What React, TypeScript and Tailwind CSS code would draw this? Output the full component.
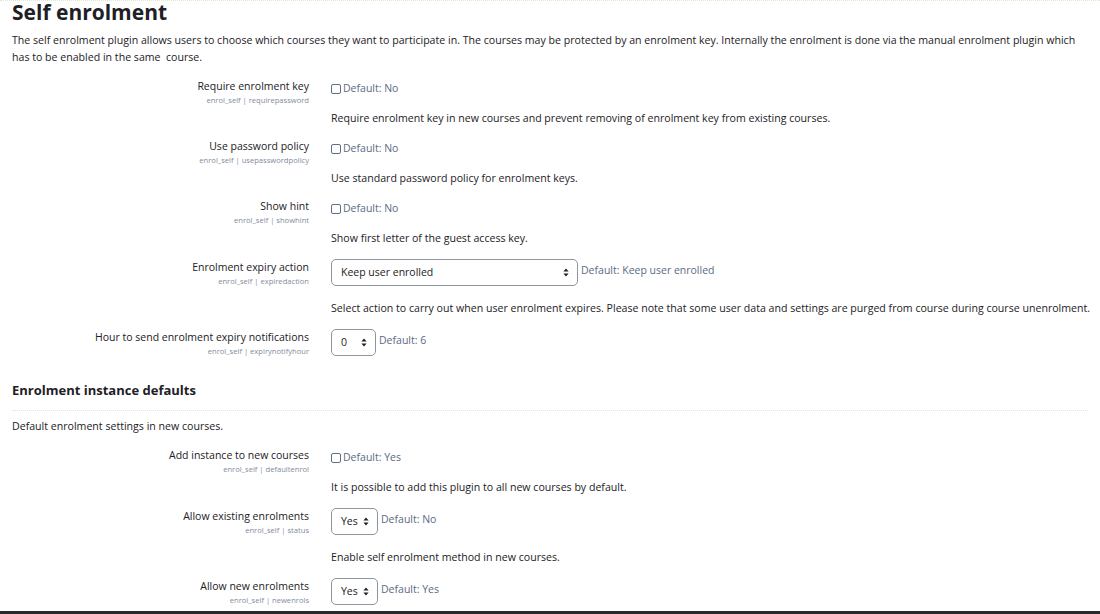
const font = { fontFamily: '"Open Sans", "Noto Sans", sans-serif' };

type Setting = {
  label: string;
  key: string;
  kind: "check" | "select";
  value?: string;
  width?: string;
  def: string;
  desc?: string;
};

const selfSettings: Setting[] = [
  {
    label: "Require enrolment key",
    key: "requirepassword",
    kind: "check",
    def: "Default: No",
    desc: "Require enrolment key in new courses and prevent removing of enrolment key from existing courses.",
  },
  {
    label: "Use password policy",
    key: "usepasswordpolicy",
    kind: "check",
    def: "Default: No",
    desc: "Use standard password policy for enrolment keys.",
  },
  {
    label: "Show hint",
    key: "showhint",
    kind: "check",
    def: "Default: No",
    desc: "Show first letter of the guest access key.",
  },
  {
    label: "Enrolment expiry action",
    key: "expiredaction",
    kind: "select",
    value: "Keep user enrolled",
    width: "w-[247px]",
    def: "Default: Keep user enrolled",
    desc: "Select action to carry out when user enrolment expires. Please note that some user data and settings are purged from course during course unenrolment.",
  },
  {
    label: "Hour to send enrolment expiry notifications",
    key: "expirynotifyhour",
    kind: "select",
    value: "0",
    width: "w-[45px]",
    def: "Default: 6",
  },
];

const instanceSettings: Setting[] = [
  {
    label: "Add instance to new courses",
    key: "defaultenrol",
    kind: "check",
    def: "Default: Yes",
    desc: "It is possible to add this plugin to all new courses by default.",
  },
  {
    label: "Allow existing enrolments",
    key: "status",
    kind: "select",
    value: "Yes",
    width: "w-[47px]",
    def: "Default: No",
    desc: "Enable self enrolment method in new courses.",
  },
  {
    label: "Allow new enrolments",
    key: "newenrols",
    kind: "select",
    value: "Yes",
    width: "w-[47px]",
    def: "Default: Yes",
  },
];

function Arrows() {
  return (
    <svg width="6" height="9" viewBox="0 0 6 9" className="shrink-0">
      <path d="M3 0.5 L5.6 3.6 H0.4 Z M3 8.5 L5.6 5.4 H0.4 Z" fill="#1d2125" />
    </svg>
  );
}

function Row({ s }: { s: Setting }) {
  const isSelect = s.kind === "select";
  return (
    <div className="mb-[13px] flex">
      <div className={`w-[309px] shrink-0 text-right ${isSelect ? "pt-[1px]" : ""}`}>
        <div className="h-[14px] text-[10.5px] leading-[14px] text-[#1d2125]">{s.label}</div>
        <div className="mt-[2px] text-[7.6px] leading-[10px] text-[#7f8c9c]">
          enrol_self | {s.key}
        </div>
      </div>
      <div className="ml-[22px] flex flex-col">
        {isSelect ? (
          <div className="flex items-start">
            <div
              className={`${s.width} flex h-[27px] items-center justify-between rounded-[5px] border border-[#8f959e] pl-[9px] pr-[8px] text-[10.5px] text-[#1d2125]`}
            >
              <span>{s.value}</span>
              <Arrows />
            </div>
            <span className="ml-[3px] mt-[4px] text-[10.5px] leading-[14px] text-[#5a6b82]">
              {s.def}
            </span>
          </div>
        ) : (
          <div className="flex h-[20px] items-center">
            <span className="mr-[2px] inline-block h-[10px] w-[10px] rounded-[2px] border border-[#5e6f88] bg-white" />
            <span className="text-[10.5px] text-[#5a6b82]">{s.def}</span>
          </div>
        )}
        {s.desc && (
          <div
            className={`${isSelect ? "mt-[14px]" : "mt-[11px]"} h-[16px] whitespace-nowrap text-[10.6px] leading-[16px] text-[#1d2125]`}
          >
            {s.desc}
          </div>
        )}
      </div>
    </div>
  );
}

export default function App() {
  return (
    <div style={font} className="relative h-[614px] w-[1100px] overflow-hidden bg-white">
      <div className="border-t border-dotted border-[#dfe8c8]" />
      <div className="px-[12px]">
        <h2 className="text-[21px] font-bold leading-[22px] text-[#1d2125]">Self enrolment</h2>
        <p className="mt-[9px] whitespace-nowrap text-[10.6px] leading-[17px] text-[#1d2125]">
          The self enrolment plugin allows users to choose which courses they want to participate in. The
          courses may be protected by an enrolment key. Internally the enrolment is done via the manual
          enrolment plugin which
          <br />
          has to be enabled in the same&nbsp; course.
        </p>
      </div>
      <div className="mt-[13px]">
        {selfSettings.map((s) => (
          <Row key={s.key} s={s} />
        ))}
      </div>
      <div className="px-[12px]">
        <h3 className="mt-[25px] text-[13px] font-bold leading-[18px] text-[#1d2125]">
          Enrolment instance defaults
        </h3>
        <div className="mt-[11px] border-t border-dotted border-[#e2e2d6]" />
        <p className="mt-[7px] text-[10.6px] leading-[16px] text-[#1d2125]">
          Default enrolment settings in new courses.
        </p>
      </div>
      <div className="mt-[14px]">
        {instanceSettings.map((s) => (
          <Row key={s.key} s={s} />
        ))}
      </div>
      <div className="absolute bottom-0 left-0 h-[3px] w-full bg-[#262b30]" />
    </div>
  );
}
